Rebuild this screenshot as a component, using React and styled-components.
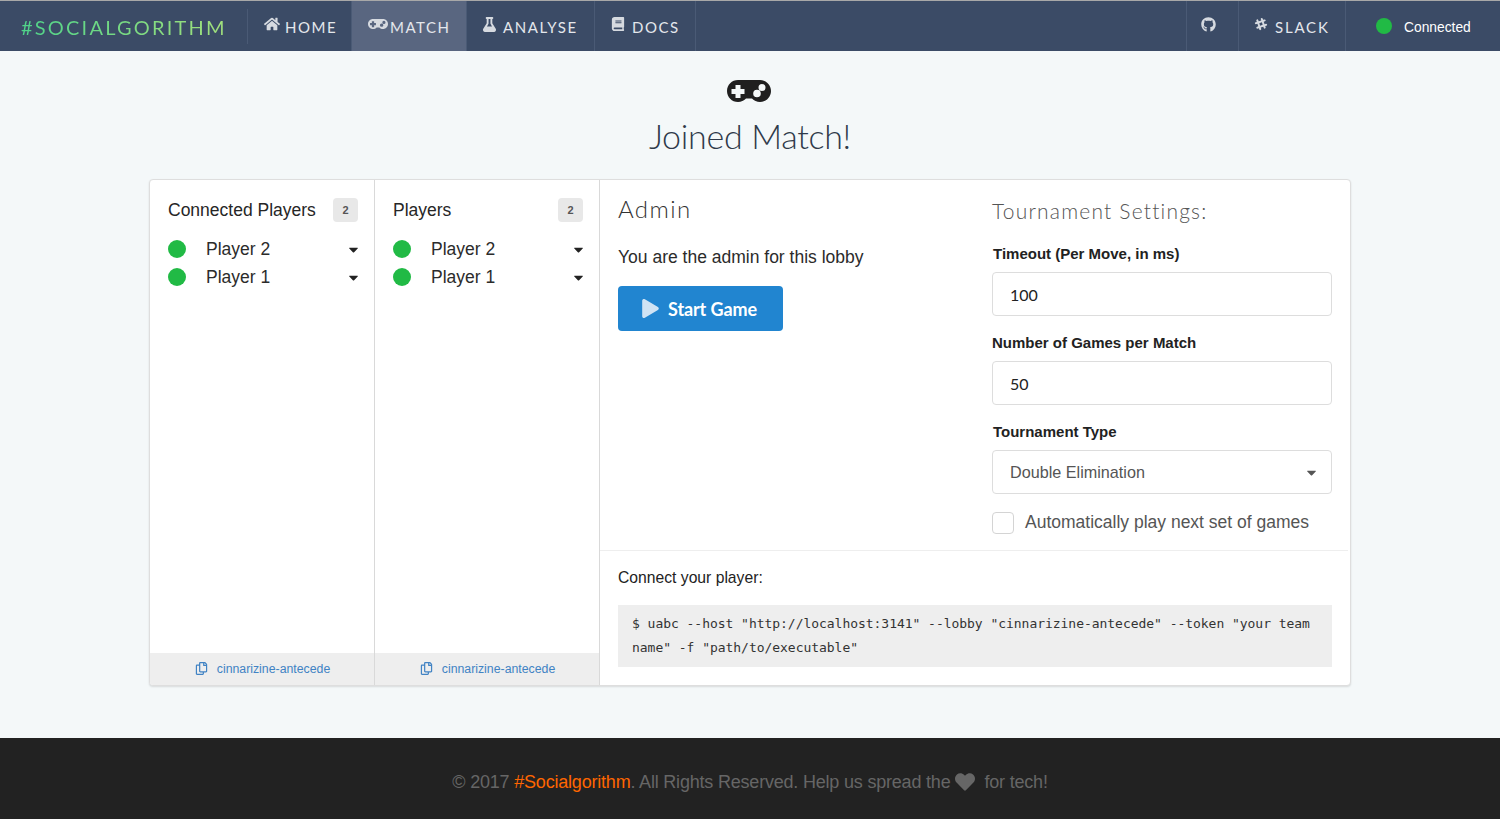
import React from "react";
import styled, { createGlobalStyle } from "styled-components";
import { FaHome, FaFlask, FaBook, FaGithub, FaSlackHash, FaHeart, FaRegCopy, FaPlay, FaCaretDown } from "react-icons/fa";

const GlobalStyle = createGlobalStyle`
  * { box-sizing: border-box; }
  html, body { margin: 0; padding: 0; }
  body {
    background: #f4f8f9;
    color: #222;
    font-family: "Liberation Sans", Arial, sans-serif;
  }
`;

const Page = styled.div`
  display: flex;
  flex-direction: column;
  min-height: 819px;
`;

const NavBar = styled.nav`
  display: flex;
  height: 51px;
  background: #3b4b66;
  border-top: 1px solid #a8a8a8;
  font-family: Lato, sans-serif;
`;

const Logo = styled.div`
  width: 248px;
  height: 35px;
  margin-top: 8px;
  padding: 6px 0 0 21px;
  border-right: 1px solid #4a5a75;
  font-size: 20px;
  line-height: 24px;
  letter-spacing: 2.2px;
  white-space: nowrap;

  span {
    background: linear-gradient(90deg, #4fd38a, #a2e07c);
    -webkit-background-clip: text;
    background-clip: text;
    color: transparent;
  }
`;

const NavItem = styled.a`
  display: flex;
  align-items: center;
  width: ${(p) => p.$width}px;
  padding-left: ${(p) => p.$pad || 0}px;
  padding-top: 1px;
  background: ${(p) => (p.$active ? "#596680" : "transparent")};
  border-right: 1px solid #4a5a75;
  border-left: ${(p) => (p.$first ? "1px solid #4a5a75" : "none")};
  color: #e4e7ec;
  font-size: 15px;
  letter-spacing: ${(p) => p.$spacing || 1.55}px;
  svg {
    flex: none;
    color: #d6dae0;
    margin-right: ${(p) => p.$gap ?? 5}px;
    margin-bottom: 5px;
  }
`;

const Spacer = styled.div`
  flex: 1;
`;

const Status = styled.div`
  display: flex;
  align-items: center;
  width: 154px;
  padding-left: 30px;
  color: #fff;
  font-family: "Liberation Sans", Arial, sans-serif;
  font-size: 13.8px;
`;

const Dot = styled.i`
  flex: none;
  display: block;
  width: ${(p) => p.$size || 18}px;
  height: ${(p) => p.$size || 18}px;
  border-radius: 50%;
  background: #21ba45;
`;

const StatusLabel = styled.span`
  margin: 3px 0 0 12px;
`;

const Main = styled.main`
  flex: 1;
  padding-top: 29px;
`;

const Hero = styled.header`
  display: flex;
  flex-direction: column;
  align-items: center;
  color: #1f1f1f;
  svg { margin-right: 2px; }
`;

const HeroTitle = styled.h1`
  margin: 12px 0 0;
  font-family: Lato, sans-serif;
  font-size: 34px;
  font-weight: 300;
  line-height: 44px;
  letter-spacing: -0.3px;
  color: #2f3a4a;
`;

const Card = styled.section`
  display: flex;
  width: 1202px;
  height: 507px;
  margin: 21px auto 0;
  background: #fff;
  border: 1px solid #dedede;
  border-radius: 4px;
  box-shadow: 0 1px 2px rgba(0, 0, 0, 0.12);
  overflow: hidden;
`;

const PlayerPanel = styled.div`
  display: flex;
  flex-direction: column;
  width: 225px;
  border-right: 1px solid #d9d9d9;
`;

const PanelBody = styled.div`
  flex: 1;
  padding: 17px 16px 0 18px;
`;

const PanelHead = styled.div`
  display: flex;
  align-items: center;
  justify-content: space-between;
  height: 25px;
  margin-bottom: 13px;
  font-size: 17.5px;
  color: #262626;
`;

const HeadTitle = styled.span`
  margin-top: 2px;
`;

const Count = styled.span`
  display: flex;
  align-items: center;
  justify-content: center;
  width: 25px;
  height: 24px;
  border-radius: 4px;
  background: #e8e8e8;
  color: #555;
  font-size: 11px;
  font-weight: bold;
`;

const PlayerRow = styled.div`
  display: flex;
  align-items: center;
  height: 28px;
  font-size: 17.5px;
  color: #2b2b2b;
  svg { color: #222; margin-left: auto; margin-right: -3px; }
`;

const PlayerName = styled.span`
  margin-left: 20px;
`;

const LobbyLink = styled.a`
  display: flex;
  align-items: center;
  justify-content: center;
  height: 32px;
  padding: 0 0 1px 1px;
  background: #eee;
  color: #4183c4;
  font-size: 12.3px;
  svg { margin-right: 9px; }
`;

const RightPanel = styled.div`
  flex: 1;
  display: flex;
  flex-direction: column;
`;

const TopSplit = styled.div`
  display: flex;
  height: 371px;
  margin-right: 2px;
  border-bottom: 1px solid #eee;
`;

const AdminColumn = styled.div`
  width: 392px;
  padding: 12px 0 0 18px;
`;

const AdminTitle = styled.h2`
  margin: 0;
  font-family: Lato, sans-serif;
  font-size: 24px;
  font-weight: 300;
  line-height: 34px;
  letter-spacing: 1.4px;
  color: #333;
`;

const AdminText = styled.p`
  margin: 19px 0 0;
  font-size: 17.5px;
  line-height: 24px;
  color: #2b2b2b;
`;

const StartButton = styled.button`
  display: flex;
  align-items: center;
  width: 165px;
  height: 45px;
  margin-top: 17px;
  padding: 0 0 0 23px;
  border: 0;
  border-radius: 4px;
  background: #2185d0;
  color: #fff;
  font-family: Lato, sans-serif;
  font-size: 18px;
  font-weight: 700;
  letter-spacing: -0.1px;
  svg { color: #cfe3f4; margin-right: 8px; }
`;

const SettingsColumn = styled.div`
  width: 340px;
  padding-top: 17px;
`;

const SettingsTitle = styled.h3`
  margin: 0 0 21px;
  font-family: Lato, sans-serif;
  font-size: 21px;
  font-weight: 300;
  line-height: 28px;
  letter-spacing: 1.2px;
  color: #555;
`;

const Field = styled.div`
  margin-bottom: 19px;
`;

const FieldLabel = styled.label`
  display: block;
  height: 26px;
  padding-left: ${(p) => (p.$flush ? 0 : 1)}px;
  font-size: 15px;
  font-weight: bold;
  line-height: 16px;
  color: #222;
`;

const FieldBox = styled.div`
  display: flex;
  align-items: center;
  justify-content: space-between;
  height: 44px;
  padding: 0 12px 0 17px;
  background: #fff;
  border: 1px solid #ddd;
  border-radius: 4px;
  font-family: ${(p) => (p.$select ? '"Liberation Sans", Arial, sans-serif' : "Lato, sans-serif")};
  font-size: ${(p) => (p.$select ? 16.2 : 16)}px;
  color: ${(p) => (p.$select ? "#555" : "#222")};
  svg { color: #555; }
`;

const CheckRow = styled.div`
  display: flex;
  align-items: flex-start;
  margin-top: -1px;
  font-size: 17.5px;
  line-height: 20px;
  color: #555;
`;

const CheckBox = styled.span`
  display: block;
  width: 22px;
  height: 22px;
  margin-right: 11px;
  border: 1px solid #d4d4d4;
  border-radius: 4px;
`;

const ConnectArea = styled.div`
  padding: 17px 18px 0;
`;

const ConnectLabel = styled.div`
  font-size: 15.7px;
  line-height: 20px;
  color: #222;
`;

const CodeBlock = styled.pre`
  margin: 17px 0 0;
  padding: 7px 14px 0;
  height: 62px;
  background: #eee;
  color: #333;
  font-family: "DejaVu Sans Mono", monospace;
  font-size: 13px;
  line-height: 24px;
  letter-spacing: -0.035px;
  white-space: pre-wrap;
`;

const Footer = styled.footer`
  display: flex;
  align-items: center;
  justify-content: center;
  height: 81px;
  padding-top: 7px;
  background: #222;
  color: #666;
  font-size: 18px;
  letter-spacing: -0.2px;
  a { color: #f60; }
  svg { margin: 0 9px 0 5px; color: #666; }
`;

const GamepadIcon = ({ size }) => (
  <svg width={size} height={size * 0.5} viewBox="0 0 44 22" fill="currentColor" aria-hidden="true">
    <path
      fillRule="evenodd"
      d="M11 0h22c6.100 0 11 4.900 11 11s-4.900 11-11 11c-3.200 0-5.900-1.300-8-3.500h-6c-2.100 2.200-4.800 3.500-8 3.500C4.900 22 0 17.100 0 11S4.900 0 11 0zM8.500 5v4h-4v5h4v4h5v-4h4V9h-4V5zM35 4a3.500 3.500 0 1 0 0 7 3.500 3.500 0 0 0 0-7zM30 9.700a3.800 3.800 0 1 0 0 7.600 3.800 3.800 0 0 0 0-7.600z"
    />
  </svg>
);

const Players = ({ title }) => (
  <PlayerPanel>
    <PanelBody>
      <PanelHead>
        <HeadTitle>{title}</HeadTitle>
        <Count>2</Count>
      </PanelHead>
      {["Player 2", "Player 1"].map((name) => (
        <PlayerRow key={name}>
          <Dot />
          <PlayerName>{name}</PlayerName>
          <FaCaretDown size={15} />
        </PlayerRow>
      ))}
    </PanelBody>
    <LobbyLink>
      <FaRegCopy size={13} />
      cinnarizine-antecede
    </LobbyLink>
  </PlayerPanel>
);

const App = () => {
  return (
    <Page>
      <GlobalStyle />
      <NavBar>
        <Logo>
          <span>#SOCIALGORITHM</span>
        </Logo>
        <NavItem $width={104} $pad={16}>
          <FaHome size={16} />
          HOME
        </NavItem>
        <NavItem $width={115} $pad={16} $active $gap={2}>
          <GamepadIcon size={20} />
          MATCH
        </NavItem>
        <NavItem $width={128} $pad={15} $gap={6}>
          <FaFlask size={15} />
          ANALYSE
        </NavItem>
        <NavItem $width={101} $pad={16} $gap={7}>
          <FaBook size={14} />
          DOCS
        </NavItem>
        <Spacer />
        <NavItem $width={53} $pad={14} $first $gap={0}>
          <FaGithub size={15} />
        </NavItem>
        <NavItem $width={107} $pad={15} $gap={7} $spacing={1.8}>
          <FaSlackHash size={14} />
          SLACK
        </NavItem>
        <Status>
          <Dot $size={16} />
          <StatusLabel>Connected</StatusLabel>
        </Status>
      </NavBar>
      <Main>
        <Hero>
          <GamepadIcon size={44} />
          <HeroTitle>Joined Match!</HeroTitle>
        </Hero>
        <Card>
          <Players title="Connected Players" />
          <Players title="Players" />
          <RightPanel>
            <TopSplit>
              <AdminColumn>
                <AdminTitle>Admin</AdminTitle>
                <AdminText>You are the admin for this lobby</AdminText>
                <StartButton>
                  <FaPlay size={19} />
                  Start Game
                </StartButton>
              </AdminColumn>
              <SettingsColumn>
                <SettingsTitle>Tournament Settings:</SettingsTitle>
                <Field>
                  <FieldLabel>Timeout (Per Move, in ms)</FieldLabel>
                  <FieldBox>100</FieldBox>
                </Field>
                <Field>
                  <FieldLabel $flush>Number of Games per Match</FieldLabel>
                  <FieldBox>50</FieldBox>
                </Field>
                <Field>
                  <FieldLabel>Tournament Type</FieldLabel>
                  <FieldBox $select>
                    Double Elimination
                    <FaCaretDown size={15} />
                  </FieldBox>
                </Field>
                <CheckRow>
                  <CheckBox />
                  Automatically play next set of games
                </CheckRow>
              </SettingsColumn>
            </TopSplit>
            <ConnectArea>
              <ConnectLabel>Connect your player:</ConnectLabel>
              <CodeBlock>
                $ uabc --host "http://localhost:3141" --lobby "cinnarizine-antecede" --token "your team name" -f "path/to/executable"
              </CodeBlock>
            </ConnectArea>
          </RightPanel>
        </Card>
      </Main>
      <Footer>
        © 2017&nbsp;<a>#Socialgorithm</a>. All Rights Reserved. Help us spread the
        <FaHeart size={20} />
        for tech!
      </Footer>
    </Page>
  );
};

export default App;
